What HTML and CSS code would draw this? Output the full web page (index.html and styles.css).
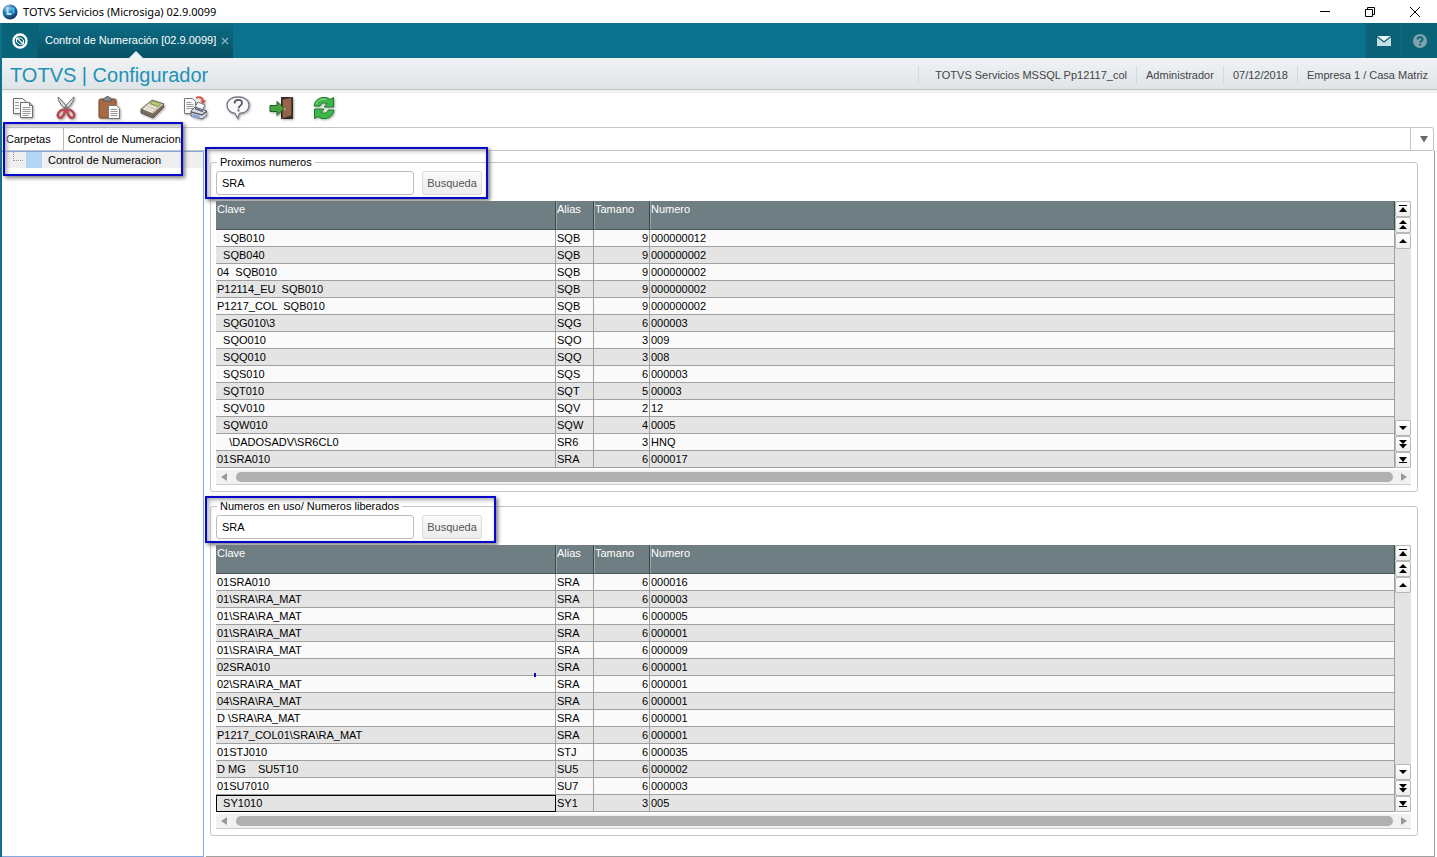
FILE: index.html
```html
<!DOCTYPE html>
<html lang="es">
<head>
<meta charset="utf-8">
<title>TOTVS Servicios (Microsiga) 02.9.0099</title>
<link rel="stylesheet" href="styles.css">
</head>
<body>
<header class="titlebar">
  <svg class="app-icon" viewBox="0 0 16 16" aria-hidden="true"><defs><radialGradient id="orb" cx=".35" cy=".25" r=".8"><stop offset="0" stop-color="#b5cde4"/><stop offset=".4" stop-color="#3a80bb"/><stop offset="1" stop-color="#0a3058"/></radialGradient></defs><circle cx="8" cy="8" r="7.500" fill="url(#orb)"/><path d="M5.500 3.500v6.500h4" fill="none" stroke="#a8e8ff" stroke-width="1.800"/><path d="M8 4.500h3.500v5" fill="none" stroke="#3cc0f5" stroke-width="1.800"/></svg>
  <span class="window-title">TOTVS Servicios (Microsiga) 02.9.0099</span>
  <div class="window-buttons">
    <button aria-label="Minimizar"><svg viewBox="0 0 12 12"><path d="M1 5.500h10"/></svg></button>
    <button aria-label="Restaurar"><svg viewBox="0 0 12 12"><path d="M1.500 3.500h7v7h-7zM3.500 3V1.500h7v7H9"/></svg></button>
    <button aria-label="Cerrar"><svg viewBox="0 0 12 12"><path d="M1 1l10 10M11 1L1 11"/></svg></button>
  </div>
</header>
<div class="frame">
  <nav class="appbar">
    <button class="home" aria-label="Inicio"><svg viewBox="0 0 16 16"><circle cx="8" cy="8" r="6.500" fill="none" stroke="#fff" stroke-width="2.400"/><path d="M4.500 5h4.500l2.500 2v4.200H7.500L4.500 9z" fill="#086378" stroke="#fff" stroke-width="1"/><path d="M5 5.300l6.300 5.400" stroke="#fff" stroke-width="1.200"/></svg></button>
    <div class="apptab"><a href="#">Control de Numeración [02.9.0099]</a><button aria-label="Cerrar pestaña"><svg viewBox="0 0 8 8"><path d="M1 1l6 6M7 1L1 7" stroke="#8fb9c5" stroke-width="1.200"/></svg></button></div>
    <div class="appbar-right">
      <button aria-label="Mensajes"><svg viewBox="0 0 16 16"><path d="M1 3h14v10H1z" fill="#c6dfe6"/><path d="M1 3h14L8 8.500z" fill="#e8f3f6"/><path d="M1 3.500l7 5.500 7-5.500" fill="none" stroke="#0b6276" stroke-width="1.200"/></svg></button>
      <button aria-label="Ayuda"><svg viewBox="0 0 16 16"><circle cx="8" cy="8" r="7" fill="#7fa4ae"/><path d="M5.600 6.500c0-3.200 5-3.200 5 0 0 1.500-2.500 1.500-2.500 3.200M8.100 10.700v1.800" fill="none" stroke="#0b6276" stroke-width="1.800"/></svg></button>
    </div>
  </nav>
  <div class="brandbar">
    <h1>TOTVS | Configurador</h1>
    <ul class="session"><li>TOTVS Servicios MSSQL Pp12117_col</li><li>Administrador</li><li>07/12/2018</li><li>Empresa 1 / Casa Matriz</li></ul>
  </div>
  <div class="toolbar">
    <button aria-label="Copiar"><svg viewBox="0 0 24 24"><g fill="#fafafa" stroke="#6e6e6e"><path d="M2.500 2.500h9l3 3v12h-12z"/><path d="M9.500 6.500h9l3 3v12h-12z"/><path d="M18.500 6.500v3h3" fill="#ccc"/><path d="M4 6.500h4M4 9.500h4M4 12.500h4M11.500 11.500h8M11.500 13.500h8M11.500 15.500h8M11.500 17.500h8M11.500 19.500h6" stroke="#999"/></g></svg></button>
    <button aria-label="Cortar"><svg viewBox="0 0 24 24"><path d="M4 1c0 3 2 7 8 13l2-2C9 6 6 3 4 1zM20 1c0 3-2 7-8 13l-2-2c5-6 8-9 10-11z" fill="#dedede" stroke="#666"/><g fill="none" stroke="#b84c55" stroke-width="2.600"><path d="M11 14c-3-1-6 1-7 4s2 5 4 3 3-4 3-7zM13 14c3-1 6 1 7 4s-2 5-4 3-3-4-3-7z"/></g><circle cx="12" cy="12" r="1" fill="#777"/></svg></button>
    <button aria-label="Pegar"><svg viewBox="0 0 24 24"><rect x="2" y="3" width="17" height="19" rx="1.500" fill="#a66b42" stroke="#774426"/><path d="M6 5c0-2 1-3 2.500-3 .5-2 3.500-2 4 0C14 2 15 3 15 5z" fill="#888" stroke="#555"/><path d="M11.500 9.500h8l3 3v10h-11z" fill="#fafafa" stroke="#777"/><path d="M13.500 13.500h7M13.500 15.500h7M13.500 17.500h7M13.500 19.500h7" stroke="#999"/></svg></button>
    <button aria-label="Calculadora"><svg viewBox="0 0 24 24"><path d="M1 13v4l12 5 11-11V8z" fill="#75695c" stroke="#62584e"/><path d="M1 13L12 4l12 4-11 10z" fill="#d2c9b9" stroke="#77705f"/><path d="M10 7.500L13 5l8 2.500-3 3z" fill="#b5cf70" stroke="#7f9550"/><path d="M6 11l8 3.500M8.500 9l8 3M4 13l8 3" stroke="#f7f3ea" stroke-width="1.600" stroke-dasharray="2 1"/></svg></button>
    <button aria-label="Imprimir"><svg viewBox="0 0 24 24"><path d="M1.500 2.500h8l3 3v12h-11z" fill="#fafafa" stroke="#777"/><path d="M3.500 6.500h5M3.500 8.500h7M3.500 10.500h7M3.500 12.500h7" stroke="#999"/><path d="M12 11l3-5 7 3-3 6z" fill="#f7f7ff" stroke="#777"/><path d="M8 15l4-4 12 4v4l-5 4-11-3z" fill="#d8dbe2" stroke="#5b6070"/><path d="M8 16l11 3 5-4M12 12.500l8 3" fill="none" stroke="#5b6070" stroke-width="1.500"/><path d="M10 18l7 2-1 3-7-2z" fill="#8aa2d0"/><path d="M13 2c4-2 7 0 7 3" fill="none" stroke="#d84c43" stroke-width="1.800"/><path d="M17 4.500h6L20 8z" fill="#d84c43"/></svg></button>
    <button aria-label="Ayuda"><svg viewBox="0 0 24 24"><path d="M12 1C5.500 1 1 4.500 1 9s3 7.500 8 8.500c1 2 2 4 3 5 0-2 .5-3.500 1.500-5C20 17 23 13.500 23 9s-4.500-8-11-8z" fill="#f9f9fc" stroke="#777a84" stroke-width="1.300"/><path d="M8.500 7.500c0-5 7.500-4.500 7.500-.5 0 3-3.500 2.500-3.500 5.500M12.500 13.500v2" fill="none" stroke="#555964" stroke-width="1.800"/></svg></button>
    <button aria-label="Salir"><svg viewBox="0 0 24 24"><path d="M12.500 1.500h11v21h-11z" fill="#3e2d26" stroke="#2d241f"/><path d="M13.500 3.500l9-2v18l-9 3z" fill="#94654b" stroke="#5b3d2d"/><circle cx="15.500" cy="13" r="1" fill="#eed591"/><path d="M1 9.500h7v-4l7 7-7 7v-4H1z" fill="#48a342" stroke="#215e22"/></svg></button>
    <button aria-label="Actualizar"><svg viewBox="0 0 24 24"><g fill="#3fb64a" stroke="#1d7d2a"><path id="turn" d="M2 10c1-6 5-8.500 10-8.500 3 0 4.500.5 6 2l3.500-2V11H12l3-3.500c-4-1.500-6 0-7 2.500z"/><use href="#turn" transform="rotate(180 12 12)"/></g><path d="M4 8.500c1-4 5-6 10-5" stroke="#99e39a" fill="none"/></svg></button>
  </div>
  <div class="tabs">
    <button class="tab">Carpetas</button><button class="tab tab-active">Control de Numeracion</button>
    <button class="tab-menu" aria-label="Lista de pestañas"><svg viewBox="0 0 10 8"><path d="M1 1h8L5 7.500z" fill="#666872"/></svg></button>
  </div>
  <div class="workspace">
    <aside class="tree"><a class="tree-item" href="#"><span class="branch"></span><span class="swatch"></span>Control de Numeracion</a></aside>
    <main class="content">
      <fieldset class="group">
        <legend>Proximos numeros</legend>
        <div class="search"><input type="text" value="SRA" aria-label="Proximos numeros"><button>Busqueda</button></div>
        <div class="grid">
          <table>
            <colgroup><col class="c-key"><col class="c-alias"><col class="c-size"><col></colgroup>
            <thead><tr><th>Clave</th><th>Alias</th><th>Tamano</th><th>Numero</th></tr></thead>
            <tbody>
              <tr><td>  SQB010</td><td>SQB</td><td>9</td><td>000000012</td></tr>
              <tr><td>  SQB040</td><td>SQB</td><td>9</td><td>000000002</td></tr>
              <tr><td>04  SQB010</td><td>SQB</td><td>9</td><td>000000002</td></tr>
              <tr><td>P12114_EU  SQB010</td><td>SQB</td><td>9</td><td>000000002</td></tr>
              <tr><td>P1217_COL  SQB010</td><td>SQB</td><td>9</td><td>000000002</td></tr>
              <tr><td>  SQG010\3</td><td>SQG</td><td>6</td><td>000003</td></tr>
              <tr><td>  SQO010</td><td>SQO</td><td>3</td><td>009</td></tr>
              <tr><td>  SQQ010</td><td>SQQ</td><td>3</td><td>008</td></tr>
              <tr><td>  SQS010</td><td>SQS</td><td>6</td><td>000003</td></tr>
              <tr><td>  SQT010</td><td>SQT</td><td>5</td><td>00003</td></tr>
              <tr><td>  SQV010</td><td>SQV</td><td>2</td><td>12</td></tr>
              <tr><td>  SQW010</td><td>SQW</td><td>4</td><td>0005</td></tr>
              <tr><td>    \DADOSADV\SR6CL0</td><td>SR6</td><td>3</td><td>HNQ</td></tr>
              <tr><td>01SRA010</td><td>SRA</td><td>6</td><td>000017</td></tr>
            </tbody>
          </table>
          <div class="vscroll">
            <button aria-label="Primero"><svg viewBox="0 0 10 10"><path d="M1 1h8v1H1zM5 3l4 5H1z"/></svg></button>
            <button aria-label="Página anterior"><svg viewBox="0 0 10 10"><path d="M5 0l4 4H1zM5 5l4 4H1z"/></svg></button>
            <button aria-label="Anterior"><svg viewBox="0 0 10 10"><path d="M5 3l4 4H1z"/></svg></button>
            <span></span>
            <button aria-label="Siguiente"><svg viewBox="0 0 10 10"><path d="M1 3h8L5 7z"/></svg></button>
            <button aria-label="Página siguiente"><svg viewBox="0 0 10 10"><path d="M1 1h8L5 5zM1 5h8L5 9.500z"/></svg></button>
            <button aria-label="Último"><svg viewBox="0 0 10 10"><path d="M1 2h8L5 7zM1 7h8v1H1z"/></svg></button>
          </div>
        </div>
        <div class="hscroll"><button aria-label="Izquierda"><svg viewBox="0 0 6 8"><path d="M6 0v8L0 4z"/></svg></button><span class="thumb"></span><button aria-label="Derecha"><svg viewBox="0 0 6 8"><path d="M0 0v8l6-4z"/></svg></button></div>
      </fieldset>
      <fieldset class="group">
        <legend>Numeros en uso/ Numeros liberados</legend>
        <div class="search"><input type="text" value="SRA" aria-label="Numeros en uso/ Numeros liberados"><button>Busqueda</button></div>
        <div class="grid">
          <table>
            <colgroup><col class="c-key"><col class="c-alias"><col class="c-size"><col></colgroup>
            <thead><tr><th>Clave</th><th>Alias</th><th>Tamano</th><th>Numero</th></tr></thead>
            <tbody>
              <tr><td>01SRA010</td><td>SRA</td><td>6</td><td>000016</td></tr>
              <tr><td>01\SRA\RA_MAT</td><td>SRA</td><td>6</td><td>000003</td></tr>
              <tr><td>01\SRA\RA_MAT</td><td>SRA</td><td>6</td><td>000005</td></tr>
              <tr><td>01\SRA\RA_MAT</td><td>SRA</td><td>6</td><td>000001</td></tr>
              <tr><td>01\SRA\RA_MAT</td><td>SRA</td><td>6</td><td>000009</td></tr>
              <tr><td>02SRA010</td><td>SRA</td><td>6</td><td>000001</td></tr>
              <tr><td>02\SRA\RA_MAT</td><td>SRA</td><td>6</td><td>000001</td></tr>
              <tr><td>04\SRA\RA_MAT</td><td>SRA</td><td>6</td><td>000001</td></tr>
              <tr><td>D \SRA\RA_MAT</td><td>SRA</td><td>6</td><td>000001</td></tr>
              <tr><td>P1217_COL01\SRA\RA_MAT</td><td>SRA</td><td>6</td><td>000001</td></tr>
              <tr><td>01STJ010</td><td>STJ</td><td>6</td><td>000035</td></tr>
              <tr><td>D MG    SU5T10</td><td>SU5</td><td>6</td><td>000002</td></tr>
              <tr><td>01SU7010</td><td>SU7</td><td>6</td><td>000003</td></tr>
              <tr><td class="selected">  SY1010</td><td>SY1</td><td>3</td><td>005</td></tr>
            </tbody>
          </table>
          <div class="vscroll">
            <button aria-label="Primero"><svg viewBox="0 0 10 10"><path d="M1 1h8v1H1zM5 3l4 5H1z"/></svg></button>
            <button aria-label="Página anterior"><svg viewBox="0 0 10 10"><path d="M5 0l4 4H1zM5 5l4 4H1z"/></svg></button>
            <button aria-label="Anterior"><svg viewBox="0 0 10 10"><path d="M5 3l4 4H1z"/></svg></button>
            <span></span>
            <button aria-label="Siguiente"><svg viewBox="0 0 10 10"><path d="M1 3h8L5 7z"/></svg></button>
            <button aria-label="Página siguiente"><svg viewBox="0 0 10 10"><path d="M1 1h8L5 5zM1 5h8L5 9.500z"/></svg></button>
            <button aria-label="Último"><svg viewBox="0 0 10 10"><path d="M1 2h8L5 7zM1 7h8v1H1z"/></svg></button>
          </div>
        </div>
        <div class="hscroll"><button aria-label="Izquierda"><svg viewBox="0 0 6 8"><path d="M6 0v8L0 4z"/></svg></button><span class="thumb"></span><button aria-label="Derecha"><svg viewBox="0 0 6 8"><path d="M0 0v8l6-4z"/></svg></button></div>
      </fieldset>
    </main>
  </div>
</div>
<div class="mark mark-tabs"></div>
<div class="mark mark-next"></div>
<div class="mark mark-used"></div>
<div class="mark-dot"></div>
</body>
</html>
```
FILE: styles.css
```css
* { box-sizing: border-box; }
body {
  margin: 0;
  min-height: 100vh;
  display: flex;
  flex-direction: column;
  position: relative;
  background: #fff;
  color: #000;
  font: 11px/15px "Liberation Sans", Arial, sans-serif;
}
button, input { font: inherit; color: inherit; margin: 0; }
button { padding: 0; border: 0; background: none; display: flex; align-items: center; justify-content: center; }
a { color: inherit; text-decoration: none; }
svg { display: block; }

.titlebar { display: flex; align-items: center; height: 23px; padding-left: 2px; }
.app-icon { width: 16px; height: 16px; }
.window-title { margin-left: 5px; font: 11px/16px "Noto Sans", "Open Sans", sans-serif; }
.window-buttons { margin-left: auto; display: flex; }
.window-buttons button { width: 45px; height: 22px; }
.window-buttons svg { width: 12px; height: 12px; fill: none; stroke: #000; }

.frame { flex: 1; display: flex; flex-direction: column; border-left: 2px solid #0b718c; }
.appbar { display: flex; height: 35px; background: #0b718c; color: #fff; }
.home { width: 36px; background: #086378; border-right: 1px solid #11596c; }
.home svg { width: 16px; height: 16px; }
.apptab {
  display: flex; align-items: center; gap: 5px; position: relative;
  padding: 0 4px 0 7px; background: linear-gradient(#0c6d85, #075165);
}
.apptab::after {
  content: ""; position: absolute; left: 50%; bottom: 0; margin-left: -7px;
  border: 7px solid transparent; border-top: 0; border-bottom-color: #eef1f3;
}
.apptab svg { width: 8px; height: 8px; }
.appbar-right { margin-left: auto; display: flex; }
.appbar-right button { width: 36px; background: #0b6276; border-left: 1px solid #0c6d85; }
.appbar-right svg { width: 16px; height: 16px; }

.brandbar {
  display: flex; align-items: flex-start; justify-content: space-between;
  height: 35px; padding: 0 9px 0 8px;
  background: linear-gradient(#f0f2f4, #dfe4e8 31px, #bcc3c7 31px, #bcc3c7 32px, #f2f2f2 32px);
}
.brandbar h1 { margin: 0; font-size: 20px; line-height: 34px; font-weight: 400; color: #2092b4; }
.session { display: flex; margin: 0; padding: 8px 0 0; list-style: none; color: #444; }
.session li { padding: 0 9px; border-left: 1px solid #d3d8db; line-height: 18px; }
.session li:first-child { padding-left: 16px; }
.session li:last-child { padding-right: 0; }

.toolbar { display: flex; gap: 19px; align-items: center; height: 34px; padding: 0 9px 4px; }
.toolbar button, .toolbar svg { width: 24px; height: 24px; }
.toolbar svg { filter: drop-shadow(1px 1px 1px #aaa); }

.tabs { display: flex; height: 24px; margin-right: 3px; border: 1px solid #c4c4c4; border-left: 0; border-radius: 0 3px 0 0; }
.tab { padding: 0 12px 0 4px; }
.tab-active { padding: 0 4px; border-left: 1px solid #b8b8b8; }
.tab-menu { width: 23px; margin-left: auto; border-left: 1px solid #c4c4c4; }
.tab-menu svg { width: 10px; height: 8px; margin-left: 3px; }

.workspace { flex: 1; display: flex; gap: 2px; margin-right: 2px; }
.tree { width: 202px; border: 1px solid #84a8dc; border-left: 0; }
.tree-item { display: flex; align-items: center; height: 16px; margin-left: 1px; padding-left: 10px; background: #efefef; }
.branch { width: 10px; height: 9px; margin-right: 3px; align-self: flex-start; border-left: 1px dotted #999; border-bottom: 1px dotted #999; }
.swatch { width: 16px; height: 16px; margin-right: 6px; background: #b3d5f3; }
.content {
  flex: 1; min-width: 0; display: flex; flex-direction: column; gap: 7px;
  padding: 4px 16px 8px 4px; border-right: 1px solid #a0a0a0; border-bottom: 1px solid #a0a0a0;
}

.group { min-width: 0; margin: 0; padding: 1px 6px 6px 5px; border: 1px solid #c4c4c4; border-radius: 3px; }
.group legend { margin-left: 1px; padding: 0 3px; }
.search { display: flex; gap: 8px; margin-bottom: 6px; }
.search input { width: 198px; height: 24px; padding: 0 5px; border: 1px solid #bdbdbd; border-radius: 3px; background: #fff; }
.search button { width: 60px; height: 24px; border: 1px solid #dcdcdc; border-radius: 2px; background: linear-gradient(#fafafa, #ececec); color: #555; }

.grid { display: flex; }
table { flex: 1; width: 100%; table-layout: fixed; border-collapse: separate; border-spacing: 0; }
.c-key { width: 340px; }
.c-alias { width: 38px; }
.c-size { width: 56px; }
th, td { padding: 0 1px; text-align: left; white-space: pre; border-right: 1px solid #a0a0a0; }
th {
  height: 29px; padding-top: 1px; vertical-align: top; font-weight: 400; color: #fff; background: #6f7e82;
  border-right-color: #3d484b; border-bottom: 1px solid #4c585b;
}
th + th { box-shadow: inset 1px 0 #98a4a7; }
td { height: 17px; line-height: 16px; background: #fafafa; border-bottom: 1px solid #a0a0a0; }
tr:nth-child(even) td { background: #e4e4e4; }
td:nth-child(3) { text-align: right; }
td.selected { outline: 1px solid #000; outline-offset: -1px; }

.vscroll { width: 16px; display: flex; flex-direction: column; background: #e4e4e4; }
.vscroll span { flex: 1; }
.vscroll button { height: 16px; border: 1px solid #b8b8b8; border-radius: 2px; background: linear-gradient(#fff, #eee); }
.vscroll svg { width: 10px; height: 10px; }
.hscroll { display: flex; align-items: center; height: 17px; border-top: 2px solid #fff; border-bottom: 1px solid #ccc; background: #f1f1f1; }
.hscroll button { width: 15px; height: 14px; }
.hscroll svg { width: 6px; height: 8px; fill: #999; }
.thumb { flex: 1; height: 10px; margin: 0 3px 0 5px; border-radius: 5px; background: #b0b0b0; }

/* Annotation frames lying over the window */
.mark { position: absolute; border: 2px solid #0808c8; box-shadow: 2px 2px 4px #777, inset 2px 2px 4px #aaa; pointer-events: none; }
.mark-tabs { left: 3px; top: 122px; width: 180px; height: 54px; }
.mark-next { left: 205px; top: 147px; width: 283px; height: 52px; }
.mark-used { left: 205px; top: 496px; width: 291px; height: 47px; }
.mark-dot { position: absolute; left: 534px; top: 673px; width: 2px; height: 4px; background: #0808c8; }
```
